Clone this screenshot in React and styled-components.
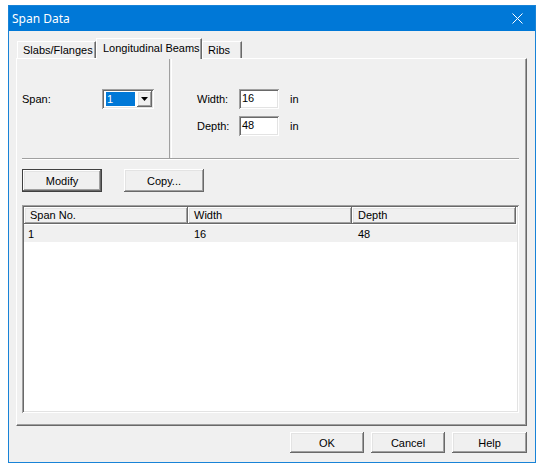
import React from 'react';
import styled, { createGlobalStyle } from 'styled-components';

const GlobalStyle = createGlobalStyle`
  html, body {
    margin: 0;
    padding: 0;
    background: #ffffff;
  }
  #root {
    padding: 5px 4px 6px 8px;
    font-family: "Liberation Sans", Arial, sans-serif;
    font-size: 11px;
    color: #000;
  }
`;

const raised = `
  box-shadow: inset -1px -1px #696969, inset 1px 1px #ffffff,
    inset -2px -2px #a0a0a0, inset 2px 2px #e3e3e3;
`;

const sunken = `
  box-shadow: inset 1px 1px #a0a0a0, inset -1px -1px #ffffff,
    inset 2px 2px #696969, inset -2px -2px #e3e3e3;
`;

const Window = styled.div`
  width: 528px;
  height: 458px;
  box-sizing: border-box;
  border: 1px solid #1883d7;
  background: #f0f0f0;
  display: flex;
  flex-direction: column;
`;

const TitleBar = styled.div`
  height: 25px;
  background: #0078d7;
  display: flex;
  align-items: center;
  justify-content: space-between;
  padding: 0 12px 0 3px;
  color: #fff;
  font-family: "Noto Sans", "Open Sans", sans-serif;
  font-size: 12px;
`;

const Body = styled.div`
  flex: 1;
  padding: 7px 8px 0 7px;
  display: flex;
  flex-direction: column;
`;

const TabStrip = styled.div`
  height: 20px;
  display: flex;
  align-items: flex-end;
  padding-left: 1px;
  position: relative;
  z-index: 1;
`;

const Tab = styled.div`
  box-sizing: border-box;
  width: ${(p) => p.w}px;
  height: ${(p) => (p.active ? 21 : 17)}px;
  margin-bottom: ${(p) => (p.active ? -1 : 0)}px;
  background: #f0f0f0;
  border-top: 1px solid #fff;
  border-left: 1px solid #fff;
  border-right: 1px solid #696969;
  box-shadow: inset -1px 0 #a0a0a0;
  padding: ${(p) => (p.active ? '3px 0 0 6px' : '2px 0 0 5px')};
  white-space: nowrap;
`;

const Panel = styled.div`
  height: 368px;
  box-sizing: border-box;
  border-top: 1px solid #fff;
  border-left: 1px solid #fff;
  border-right: 1px solid #696969;
  border-bottom: 1px solid #696969;
  box-shadow: inset -1px -1px #a0a0a0;
  padding: 0 7px 0 5px;
  display: flex;
  flex-direction: column;
`;

const TopSection = styled.div`
  height: 99px;
  display: flex;
`;

const SpanColumn = styled.div`
  width: 147px;
  padding-top: 30px;
  box-sizing: border-box;
`;

const VDivider = styled.div`
  width: 1px;
  border-left: 1px solid #a0a0a0;
  border-right: 1px solid #fff;
`;

const SizeColumn = styled.div`
  padding: 30px 0 0 25px;
  display: flex;
  flex-direction: column;
  gap: 7px;
`;

const FieldRow = styled.div`
  display: flex;
  align-items: center;
  height: 20px;
`;

const Label = styled.span`
  width: ${(p) => p.w}px;
`;

const TextBox = styled.div`
  width: 40px;
  height: 20px;
  box-sizing: border-box;
  background: #fff;
  ${sunken}
  padding: 3px 0 0 3px;
`;

const Unit = styled.span`
  margin-left: 11px;
`;

const Combo = styled.div`
  width: 52px;
  height: 20px;
  box-sizing: border-box;
  background: #fff;
  ${sunken}
  padding: 2px;
  display: flex;
  gap: 2px;
`;

const ComboValue = styled.div`
  flex: 1;
  margin: 1px 0 1px 2px;
  background: #0078d7;
  color: #fff;
  padding: 1px 0 0 1px;
`;

const ComboArrow = styled.div`
  width: 15px;
  background: #f0f0f0;
  ${raised}
  display: flex;
  align-items: center;
  justify-content: center;
`;

const HDivider = styled.div`
  height: 0;
  border-top: 1px solid #a0a0a0;
  border-bottom: 1px solid #fff;
`;

const ActionRow = styled.div`
  display: flex;
  gap: 22px;
  margin-top: 9px;
`;

const Button = styled.button`
  width: ${(p) => p.w || 80}px;
  height: ${(p) => p.h || 23}px;
  box-sizing: border-box;
  background: #f0f0f0;
  font-family: "Liberation Sans", Arial, sans-serif;
  font-size: 11px;
  color: #000;
  padding: 0;
  border: ${(p) => (p.primary ? '1px solid #404040' : 'none')};
  ${raised}
`;

const ListView = styled.div`
  margin-top: 13px;
  height: 208px;
  box-sizing: border-box;
  background: #fff;
  ${sunken}
  padding: 2px;
`;

const HeaderRow = styled.div`
  display: grid;
  grid-template-columns: 164px 164px 164px;
  height: 17px;
`;

const HeaderCell = styled.div`
  background: #f0f0f0;
  ${raised}
  padding: 2px 0 0 6px;
`;

const DataRow = styled.div`
  display: grid;
  grid-template-columns: 164px 164px 164px;
  height: 17px;
  background: #f0f0f0;
  margin-top: 1px;
`;

const DataCell = styled.div`
  padding: 3px 0 0 ${(p) => p.pad || 6}px;
`;

const DialogButtons = styled.div`
  margin-top: 6px;
  display: flex;
  justify-content: flex-end;
  gap: 7px;
`;

const CloseIcon = () => (
  <svg width="11" height="11" viewBox="0 0 11 11">
    <path d="M0.5 0.5 L10.5 10.5 M10.5 0.5 L0.5 10.5" stroke="#fff" strokeWidth="1" />
  </svg>
);

const ArrowIcon = () => (
  <svg width="7" height="4" viewBox="0 0 7 4">
    <path d="M0 0 H7 L3.5 4 Z" fill="#000" />
  </svg>
);

const rows = [{ span: '1', width: '16', depth: '48' }];

export default function App() {
  return (
    <>
      <GlobalStyle />
      <Window>
        <TitleBar>
          <span>Span Data</span>
          <CloseIcon />
        </TitleBar>
        <Body>
          <TabStrip>
            <Tab w={79}>Slabs/Flanges</Tab>
            <Tab w={106} active>Longitudinal Beams</Tab>
            <Tab w={40}>Ribs</Tab>
          </TabStrip>
          <Panel>
            <TopSection>
              <SpanColumn>
                <FieldRow>
                  <Label w={80}>Span:</Label>
                  <Combo>
                    <ComboValue>1</ComboValue>
                    <ComboArrow>
                      <ArrowIcon />
                    </ComboArrow>
                  </Combo>
                </FieldRow>
              </SpanColumn>
              <VDivider />
              <SizeColumn>
                <FieldRow>
                  <Label w={42}>Width:</Label>
                  <TextBox>16</TextBox>
                  <Unit>in</Unit>
                </FieldRow>
                <FieldRow>
                  <Label w={42}>Depth:</Label>
                  <TextBox>48</TextBox>
                  <Unit>in</Unit>
                </FieldRow>
              </SizeColumn>
            </TopSection>
            <HDivider />
            <ActionRow>
              <Button primary>Modify</Button>
              <Button>Copy...</Button>
            </ActionRow>
            <ListView>
              <HeaderRow>
                <HeaderCell>Span No.</HeaderCell>
                <HeaderCell>Width</HeaderCell>
                <HeaderCell>Depth</HeaderCell>
              </HeaderRow>
              {rows.map((r) => (
                <DataRow key={r.span}>
                  <DataCell pad={4}>{r.span}</DataCell>
                  <DataCell>{r.width}</DataCell>
                  <DataCell>{r.depth}</DataCell>
                </DataRow>
              ))}
            </ListView>
          </Panel>
          <DialogButtons>
            <Button w={74} h={21}>OK</Button>
            <Button w={74} h={21}>Cancel</Button>
            <Button w={75} h={21}>Help</Button>
          </DialogButtons>
        </Body>
      </Window>
    </>
  );
}
